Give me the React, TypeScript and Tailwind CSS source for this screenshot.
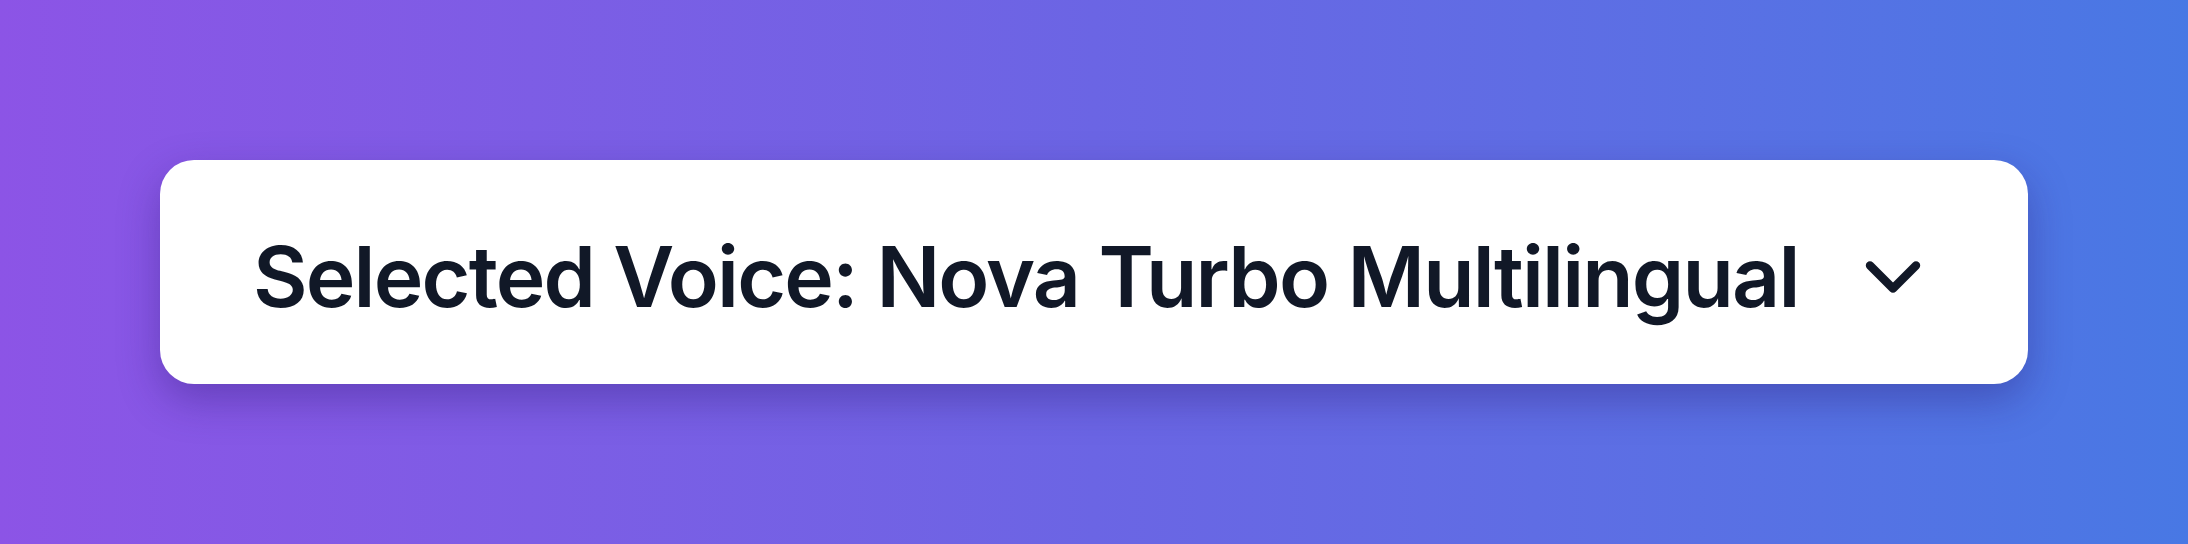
import { ChevronDown } from "lucide-react";

// ── Voice selector card ─────────────────────────────────────────

function VoiceSelect({ voice }: { voice: string }) {
  return (
    <button
      type="button"
      className="w-full h-[224px] flex items-center justify-between gap-12 pl-[93px] pr-[94px] pt-[10px] rounded-[34px] bg-white shadow-[0_16px_40px_rgba(40,20,110,0.35)] text-left"
    >
      <span className="text-[84px] leading-none font-semibold tracking-[-0.022em] text-[#111827] whitespace-nowrap">
        Selected Voice: {voice}
      </span>
      <ChevronDown size={92} strokeWidth={2.2} className="text-[#111827] shrink-0" />
    </button>
  );
}

export default function App() {
  return (
    <div
      className="w-[2188px] h-[544px] p-40 bg-gradient-to-r from-[#8c54e6] via-[#6b65e4] to-[#4878e4]"
      style={{ fontFamily: "Inter, 'Noto Sans', sans-serif" }}
    >
      <VoiceSelect voice="Nova Turbo Multilingual" />
    </div>
  );
}
